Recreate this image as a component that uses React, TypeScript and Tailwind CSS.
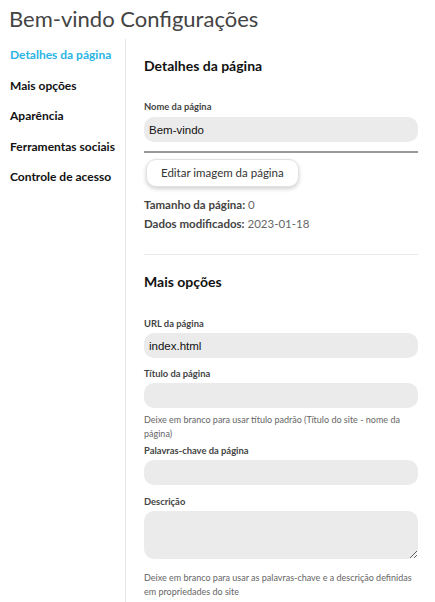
export default function App() {
  const font = { fontFamily: "Lato, 'Noto Sans', sans-serif" };
  const label = "block text-[9.4px] font-bold text-[#444] leading-[12px]";
  const input =
    "block w-full h-[25px] rounded-[10px] bg-[#ebebeb] px-[5px] text-[11.5px] text-[#111] outline-none";
  const inputFont = { fontFamily: "'Liberation Sans', Arial, sans-serif" };
  const help = "text-[9px] text-[#666] leading-[14px]";
  return (
    <div className="w-[435px] h-[602px] bg-white overflow-hidden" style={font}>
      <h1 className="px-[9px] pt-[6px] h-[39px] text-[22px] leading-[26px] text-[#444] font-normal">
        Bem-vindo Configurações
      </h1>
      <div className="flex h-[563px]">
        <nav className="w-[126px] shrink-0 border-r border-[#e6e6e6] pt-[7px] flex flex-col">
          {[
            "Detalhes da página",
            "Mais opções",
            "Aparência",
            "Ferramentas sociais",
            "Controle de acesso",
          ].map((t, i) => (
            <div
              key={t}
              className={
                "pl-[10px] h-[30.5px] text-[12px] font-bold leading-[17px] " +
                (i === 0 ? "text-[#2ab4e4]" : "text-[#111]")
              }
            >
              {t}
            </div>
          ))}
        </nav>
        <main className="flex-1 pl-[18px] pr-[17px]">
          <h2 className="pt-[18px] text-[14px] font-bold text-[#111] leading-[18px]">
            Detalhes da página
          </h2>
          <div className="mt-[26px]">
            <span className={label}>Nome da página</span>
            <div className="mt-[4px] border-b-2 border-[#999] pb-[9px]">
              <input className={input} style={inputFont} defaultValue="Bem-vindo" />
            </div>
            <button className="mt-[6px] ml-[2px] h-[28px] px-[14px] rounded-[10px] bg-white border border-[#e2e2e2] shadow-[0_2px_4px_rgba(0,0,0,0.18)] text-[11.5px] text-[#333]">
              Editar imagem da página
            </button>
          </div>
          <div className="mt-[8px] text-[11.5px] leading-[19px] text-[#444]">
            <div>
              <b className="font-bold">Tamanho da página:</b> <span className="text-[#666]">0</span>
            </div>
            <div>
              <b className="font-bold">Dados modificados:</b>{" "}
              <span className="text-[#666]">2023-01-18</span>
            </div>
          </div>
          <div className="mt-[21px] border-t border-[#e8e8e8]" />
          <h2 className="pt-[18px] text-[14px] font-bold text-[#111] leading-[18px]">
            Mais opções
          </h2>
          <div className="mt-[27px]">
            <span className={label}>URL da página</span>
            <input className={input + " mt-[3px]"} style={inputFont} defaultValue="index.html" />
          </div>
          <div className="mt-[10px]">
            <span className={label}>Título da página</span>
            <input className={input + " mt-[3px]"} style={inputFont} />
            <p className={help + " mt-[5px]"}>
              Deixe em branco para usar título padrão (Título do site - nome da página)
            </p>
          </div>
          <div className="mt-[4px]">
            <span className={label}>Palavras-chave da página</span>
            <input className={input + " mt-[3px]"} style={inputFont} />
          </div>
          <div className="mt-[11px]">
            <span className={label}>Descrição</span>
            <textarea
              className="mt-[3px] block w-full h-[48px] rounded-[10px] bg-[#ebebeb] px-[5px] text-[11.5px] outline-none"
              style={inputFont}
            />
            <p className={help + " mt-[12px]"}>
              Deixe em branco para usar as palavras-chave e a descrição definidas em propriedades do site
            </p>
          </div>
        </main>
      </div>
    </div>
  );
}
